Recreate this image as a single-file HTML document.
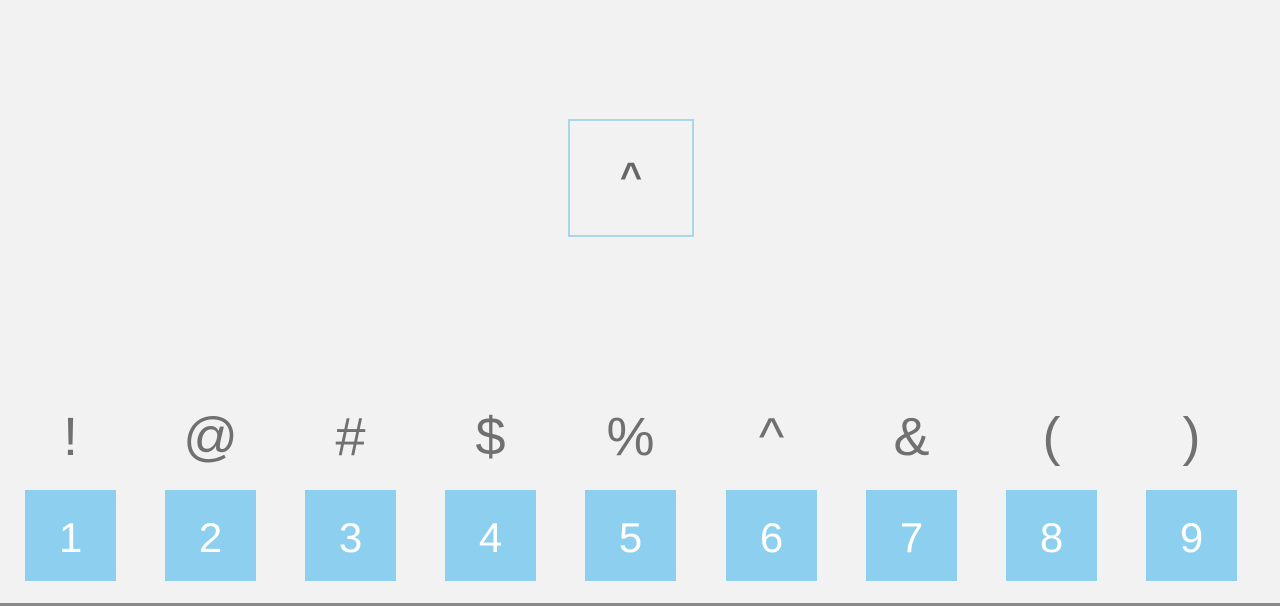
<!DOCTYPE html><html><head><style>
body{margin:0;width:1280px;height:606px;background:#f2f2f2;position:relative;overflow:hidden;font-family:"Liberation Sans",sans-serif}
.tb{position:absolute;left:568px;top:119px;width:122px;height:114px;border:2px solid #a6d8ea;color:#666;font-size:38px;text-align:center;line-height:112px;font-weight:bold}
.s{position:absolute;top:402px;width:91px;text-align:center;font-size:54px;color:#707070;line-height:70px}
.k{position:absolute;top:490px;width:91px;height:91px;background:#8ccfee;color:#fff;font-size:42px;text-align:center;line-height:96px}
.bl{position:absolute;left:0;top:603px;width:1280px;height:3px;background:#8a8a8a}
</style></head><body>
<div class="tb">^</div>
<div class="s" style="left:25px">!</div>
<div class="s" style="left:165px">@</div>
<div class="s" style="left:305px">#</div>
<div class="s" style="left:445px">$</div>
<div class="s" style="left:585px">%</div>
<div class="s" style="left:726px">^</div>
<div class="s" style="left:866px">&amp;</div>
<div class="s" style="left:1006px">(</div>
<div class="s" style="left:1146px">)</div>
<div class="k" style="left:25px">1</div>
<div class="k" style="left:165px">2</div>
<div class="k" style="left:305px">3</div>
<div class="k" style="left:445px">4</div>
<div class="k" style="left:585px">5</div>
<div class="k" style="left:726px">6</div>
<div class="k" style="left:866px">7</div>
<div class="k" style="left:1006px">8</div>
<div class="k" style="left:1146px">9</div>
<div class="bl"></div>
</body></html>
